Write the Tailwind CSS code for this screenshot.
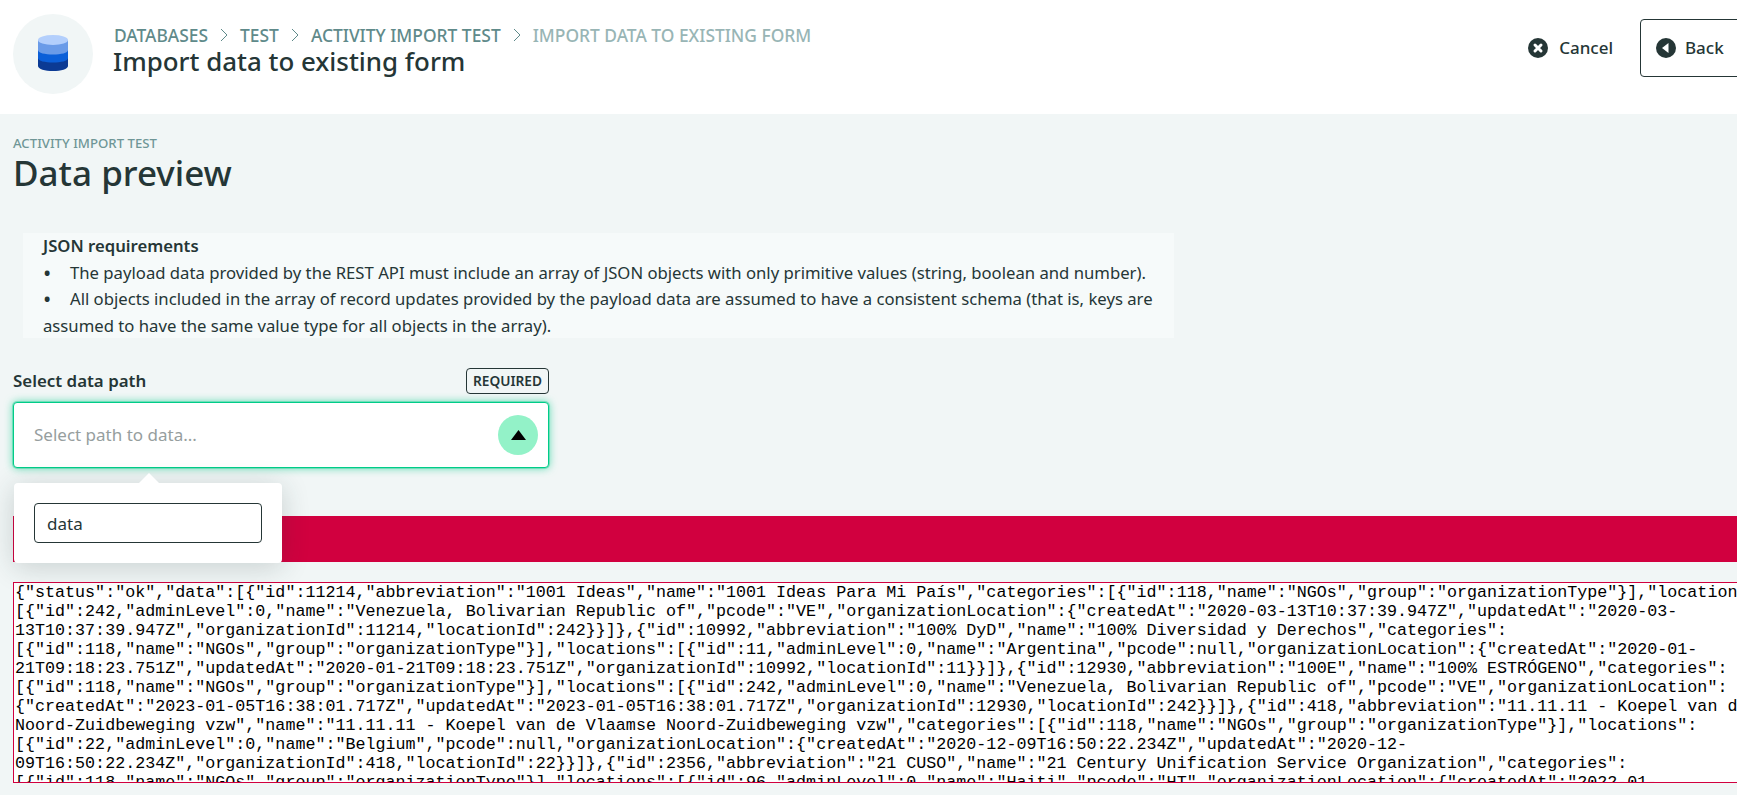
<!DOCTYPE html>
<html lang="en">
<head>
    <meta charset="UTF-8">
    <title>Import data to existing form</title>
    <script src="https://cdn.jsdelivr.net/npm/@tailwindcss/browser@4"></script>
</head>
<body class="h-[795px] overflow-hidden bg-[#f1f6f6] font-['Noto_Sans',sans-serif] text-[#253636]">
    <header class="h-[114px] bg-white flex items-center pl-[13px] overflow-hidden">
        <div class="w-20 h-20 mb-1.5 rounded-full bg-[#f1f6f6] flex items-center justify-center shrink-0">
            <svg class="mb-0.5" width="30" height="36" viewBox="0 0 30 36">
                <path d="M0 18v13c0 3 7 5 15 5s15-2 15-5V18z" fill="#0b3a94"/>
                <path d="M0 10v13c0 3 7 4.500 15 4.500s15-1.500 15-4.500V10z" fill="#0b5fd8"/>
                <path d="M0 5v10c0 3 7 4.500 15 4.500s15-1.500 15-4.500V5z" fill="#6a9be8"/>
                <ellipse cx="15" cy="5" rx="15" ry="5" fill="#b3cffc"/>
            </svg>
        </div>
        <div class="ml-5 flex-1 mb-4">
            <nav class="flex items-center pl-px text-[17.4px] leading-6 font-medium text-[#5f8a8a] uppercase">
                <span>Databases</span>
                <svg class="mx-3" width="8" height="14" viewBox="0 0 8 14" fill="none" stroke="#5f8a8a"><path d="M1 1l6 6-6 6"/></svg>
                <span>Test</span>
                <svg class="mx-3" width="8" height="14" viewBox="0 0 8 14" fill="none" stroke="#5f8a8a"><path d="M1 1l6 6-6 6"/></svg>
                <span>Activity import test</span>
                <svg class="mx-3" width="8" height="14" viewBox="0 0 8 14" fill="none" stroke="#5f8a8a"><path d="M1 1l6 6-6 6"/></svg>
                <span class="text-[#98b5b5]">Import data to existing form</span>
            </nav>
            <h1 class="text-[25.9px] leading-7 font-medium">Import data to existing form</h1>
        </div>
        <button class="flex items-center gap-[11px] text-[17px] font-medium mb-[18px]">
            <svg width="20" height="20" viewBox="0 0 20 20"><circle cx="10" cy="10" r="10" fill="#253636"/><path d="M7 7l6 6M13 7l-6 6" stroke="#fff" stroke-width="3" stroke-linecap="round"/></svg>
            Cancel
        </button>
        <button class="ml-[27px] w-[117px] h-[58px] shrink-0 -mr-5 mb-[18px] border border-[#253636] rounded pl-[15px] flex items-center gap-[9px] text-[17px] font-medium">
            <svg width="20" height="20" viewBox="0 0 20 20"><circle cx="10" cy="10" r="10" fill="#253636"/><path d="M12.500 5v10L6 10z" fill="#fff"/></svg>
            Back
        </button>
    </header>
    <main class="pl-[13px]">
        <p class="mt-[21px] text-[13.2px] leading-4 font-medium text-[#6f9696] uppercase">Activity import test</p>
        <h2 class="text-[35px] leading-[44px] font-medium">Data preview</h2>
        <div class="mt-[38px] ml-2.5 w-[1151px] h-[105px] bg-[#f6fafa] pl-5 pr-4 text-[16.7px] leading-[26.5px]">
            <p class="font-semibold">JSON requirements</p>
            <p><span class="inline-block w-[27px] text-[22px] leading-[0] align-[-2px]">•</span>The payload data provided by the REST API must include an array of JSON objects with only primitive values (string, boolean and number).</p>
            <p><span class="inline-block w-[27px] text-[22px] leading-[0] align-[-2px]">•</span>All objects included in the array of record updates provided by the payload data are assumed to have a consistent schema (that is, keys are assumed to have the same value type for all objects in the array).</p>
        </div>
        <div class="relative mt-[30px] w-[536px]">
            <div class="flex items-center justify-between h-[26px]">
                <label class="text-[16.9px] font-semibold">Select data path</label>
                <span class="border border-[#253636] rounded px-[6px] h-[26px] leading-6 text-[13.7px] font-semibold">REQUIRED</span>
            </div>
            <div class="mt-2 h-[66px] bg-white border border-[#00cc88] rounded shadow-[0_0_0_1px_#00cc8855,0_0_8px_#00cc88aa] flex items-center justify-between pl-5 pr-[10px]">
                <span class="text-[17px] text-[#969e9e]">Select path to data...</span>
                <span class="w-10 h-10 rounded-full bg-[#93f2c8] flex items-center justify-center">
                    <svg width="15" height="10" viewBox="0 0 15 10"><path d="M7.500 0l7.500 10H0z" fill="#000"/></svg>
                </span>
            </div>
            <div class="absolute left-px top-[115px] w-[268px] h-20 bg-white rounded z-10 p-5 shadow-[0_4px_28px_#25363633]">
                <div class="absolute left-[125px] -top-2.5 w-0 h-0 border-x-[10px] border-x-transparent border-b-[10px] border-b-white"></div>
                <input value="data" class="w-full h-10 border border-[#253636] rounded px-3 text-[17px] text-[#253636] bg-white">
            </div>
        </div>
        <div class="mt-[48px] h-[46px] bg-[#d1003f]"></div>
        <pre class="mt-5 h-[201px] w-[1800px] overflow-hidden bg-white border border-[#d1003f] pl-px font-['Liberation_Mono',monospace] text-[16.7px] leading-[19px] text-black">{"status":"ok","data":[{"id":11214,"abbreviation":"1001 Ideas","name":"1001 Ideas Para Mi País","categories":[{"id":118,"name":"NGOs","group":"organizationType"}],"locations":
[{"id":242,"adminLevel":0,"name":"Venezuela, Bolivarian Republic of","pcode":"VE","organizationLocation":{"createdAt":"2020-03-13T10:37:39.947Z","updatedAt":"2020-03-
13T10:37:39.947Z","organizationId":11214,"locationId":242}}]},{"id":10992,"abbreviation":"100% DyD","name":"100% Diversidad y Derechos","categories":
[{"id":118,"name":"NGOs","group":"organizationType"}],"locations":[{"id":11,"adminLevel":0,"name":"Argentina","pcode":null,"organizationLocation":{"createdAt":"2020-01-
21T09:18:23.751Z","updatedAt":"2020-01-21T09:18:23.751Z","organizationId":10992,"locationId":11}}]},{"id":12930,"abbreviation":"100E","name":"100% ESTRÓGENO","categories":
[{"id":118,"name":"NGOs","group":"organizationType"}],"locations":[{"id":242,"adminLevel":0,"name":"Venezuela, Bolivarian Republic of","pcode":"VE","organizationLocation":
{"createdAt":"2023-01-05T16:38:01.717Z","updatedAt":"2023-01-05T16:38:01.717Z","organizationId":12930,"locationId":242}}]},{"id":418,"abbreviation":"11.11.11 - Koepel van de Vlaamse
Noord-Zuidbeweging vzw","name":"11.11.11 - Koepel van de Vlaamse Noord-Zuidbeweging vzw","categories":[{"id":118,"name":"NGOs","group":"organizationType"}],"locations":
[{"id":22,"adminLevel":0,"name":"Belgium","pcode":null,"organizationLocation":{"createdAt":"2020-12-09T16:50:22.234Z","updatedAt":"2020-12-
09T16:50:22.234Z","organizationId":418,"locationId":22}}]},{"id":2356,"abbreviation":"21 CUSO","name":"21 Century Unification Service Organization","categories":
[{"id":118,"name":"NGOs","group":"organizationType"}],"locations":[{"id":96,"adminLevel":0,"name":"Haiti","pcode":"HT","organizationLocation":{"createdAt":"2022-01-</pre>
    </main>
</body>
</html>
